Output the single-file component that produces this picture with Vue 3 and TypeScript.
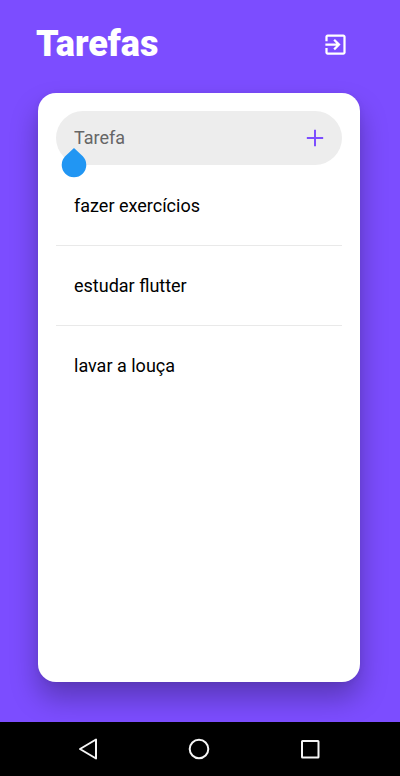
<script setup lang="ts">
import { ref } from 'vue'

const draft = ref('')
const tasks = ref<string[]>(['fazer exercícios', 'estudar flutter', 'lavar a louça'])

function addTask(): void {
  const title = draft.value.trim()
  if (!title) return
  tasks.value.push(title)
  draft.value = ''
}
</script>

<template>
  <div class="screen">
    <main class="content">
      <header class="header">
        <h1 class="title">Tarefas</h1>
        <button class="icon-button" type="button" aria-label="Sair">
          <svg viewBox="0 0 24 24" width="27" height="27" fill="currentColor">
            <path d="M10.09 15.59L11.5 17l5-5-5-5-1.41 1.41L12.67 11H3v2h9.67l-2.58 2.59zM19 3H5c-1.11 0-2 .9-2 2v4h2V5h14v14H5v-4H3v4c0 1.1.89 2 2 2h14c1.1 0 2-.9 2-2V5c0-1.1-.9-2-2-2z" />
          </svg>
        </button>
      </header>

      <section class="card">
        <form class="field" @submit.prevent="addTask">
          <input v-model="draft" class="input" type="text" placeholder="Tarefa" aria-label="Tarefa" />
          <button class="icon-button add" type="submit" aria-label="Adicionar">
            <svg viewBox="0 0 24 24" width="28" height="28" fill="currentColor">
              <path d="M19 12.850h-6.150V19h-1.700v-6.150H5v-1.700h6.150V5h1.700v6.150H19z" />
            </svg>
          </button>
          <svg class="handle" viewBox="0 0 26 30" width="26" height="30" aria-hidden="true">
            <path d="M13 0l8.800 8.300a12.300 12.300 0 1 1-17.600 0z" fill="#2196f3" />
          </svg>
        </form>
        <ul class="list">
          <li v-for="task in tasks" :key="task" class="task">{{ task }}</li>
        </ul>
      </section>
    </main>

    <nav class="system-bar">
      <button class="system-button" type="button" aria-label="Voltar">
        <svg viewBox="0 0 24 24" width="24" height="24">
          <path d="M20 2.500v19L4 12z" />
        </svg>
      </button>
      <button class="system-button" type="button" aria-label="Início">
        <svg viewBox="0 0 24 24" width="24" height="24">
          <circle cx="12" cy="12" r="9.300" />
        </svg>
      </button>
      <button class="system-button" type="button" aria-label="Recentes">
        <svg viewBox="0 0 24 24" width="24" height="24">
          <rect x="4" y="4" width="16.500" height="16.500" rx="0.500" />
        </svg>
      </button>
    </nav>
  </div>
</template>

<style>
body {
  margin: 0;
}
</style>

<style scoped>
.screen {
  display: flex;
  flex-direction: column;
  min-height: 100vh;
  background: #7c4dff;
  font-family: Roboto, "Liberation Sans", sans-serif;
}

.content {
  flex: 1;
  display: flex;
  flex-direction: column;
  padding: 23px 40px 40px 38px;
}

.header {
  display: flex;
  align-items: center;
  justify-content: space-between;
  padding-right: 11px;
  margin-bottom: 28px;
}

.title {
  margin: 0 0 0 -2px;
  color: #fff;
  font-size: 36px;
  line-height: 42px;
  font-weight: 900;
}

.icon-button {
  display: flex;
  padding: 0;
  border: 0;
  background: none;
  color: #fff;
  cursor: pointer;
}

.card {
  flex: 1;
  padding: 18px;
  border-radius: 18px;
  background: #fff;
  box-shadow:
    0 16px 28px rgba(0, 0, 0, 0.28),
    0 1px 6px rgba(0, 0, 0, 0.06);
}

.field {
  position: relative;
  display: flex;
  align-items: center;
  height: 54px;
  padding: 0 13px 0 18px;
  border-radius: 27px;
  background: #ededed;
}

.input {
  flex: 1;
  min-width: 0;
  padding: 0;
  border: 0;
  outline: 0;
  background: none;
  color: #000;
  font: inherit;
  font-size: 18px;
  line-height: 24px;
}

.input::placeholder {
  color: #666;
  opacity: 1;
}

.add {
  color: #7c4dff;
}

.handle {
  position: absolute;
  top: 37px;
  left: 5px;
}

.list {
  margin: 0;
  padding: 1px 0 0;
  list-style: none;
}

.task {
  box-sizing: border-box;
  height: 80px;
  padding: 0 18px;
  color: #000;
  font-size: 18px;
  line-height: 80px;
}

.task:not(:last-child) {
  border-bottom: 1px solid #e9e9e9;
}

.system-bar {
  display: flex;
  align-items: center;
  justify-content: center;
  gap: 87px;
  height: 54px;
  padding-right: 2px;
  background: #000;
}

.system-button {
  display: flex;
  padding: 0;
  border: 0;
  background: none;
}

.system-button svg {
  fill: none;
  stroke: #f5f5f5;
  stroke-width: 2;
  stroke-linejoin: round;
}
</style>
